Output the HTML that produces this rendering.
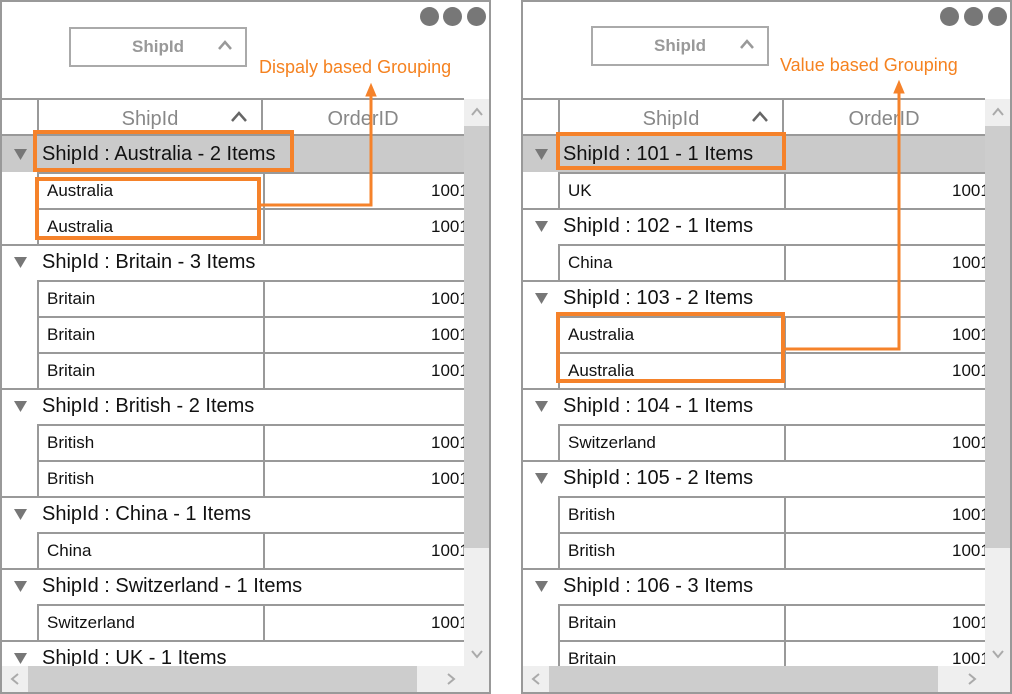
<!DOCTYPE html>
<html><head><meta charset="utf-8"><style>
*{margin:0;padding:0;box-sizing:border-box}
body{width:1012px;height:694px;background:#fff;position:relative;overflow:hidden;font-family:"Liberation Sans",sans-serif}
.p{position:absolute;top:0;width:491px;height:694px;border:2px solid #999;background:#fff;overflow:hidden}
.dot{position:absolute;top:5px;width:19px;height:19px;border-radius:50%;background:#777}
.combo{position:absolute;width:178px;height:40px;border:2px solid #aaa;color:#999;font-size:17px;font-weight:bold;text-align:center;line-height:36px}
.combo svg{position:absolute;right:13px;top:11px}
.grid{position:absolute;left:0;top:96px;width:462px;height:568px;overflow:hidden;border-top:2px solid #999}
.hd{position:absolute;top:0;left:0;width:462px;height:36px;border-bottom:2px solid #999;color:#888;font-size:20px}
.hd .c1{position:absolute;left:35px;top:0;width:226px;height:36px;border-left:2px solid #999;border-right:2px solid #999;text-align:center;line-height:38px}
.hd .c1 svg{position:absolute;right:14px;top:11px}
.hd .c2{position:absolute;left:261px;width:200px;top:0;text-align:center;line-height:38px}
.g{position:absolute;left:0;width:462px;height:36px;font-size:20px;color:#111;line-height:36px}
.g svg{position:absolute;left:12px;top:13px}
.g .x{position:absolute;left:40px;top:0;white-space:nowrap}
.g.gr{background:#cacaca}
.line{position:absolute;left:0;width:462px;height:2px;background:#999}
.r{position:absolute;left:35px;width:440px;height:36px;border-left:2px solid #999;border-top:2px solid #999;font-size:17px;color:#111;line-height:33px}
.r .a{position:absolute;left:8px;top:0}
.r .b{position:absolute;left:224px;top:0;width:200px;height:34px;border-left:2px solid #999}
.r .b span{position:absolute;left:166px}
.vs{position:absolute;left:462px;top:97px;width:26px;height:568px;background:#efefef}
.vs .th{position:absolute;left:0;top:27px;width:26px;height:422px;background:#cdcdcd}
.hs{position:absolute;left:0;top:664px;width:488px;height:26px;background:#efefef}
.hs .th{position:absolute;left:26px;top:0;width:389px;height:26px;background:#cdcdcd}
.ann{position:absolute;color:#f58220;font-size:18px;white-space:nowrap}
</style></head><body>

<div class="p" style="left:0">
<div class="dot" style="left:418px"></div><div class="dot" style="left:441px"></div><div class="dot" style="left:465px"></div>
<div class="combo" style="left:67px;top:25px">ShipId<svg width="14" height="10"><path d="M1 9 L7 2 L13 9" stroke="#999" stroke-width="2.5" fill="none"/></svg></div>
<div class="grid">
<div class="hd"><div class="c1">ShipId<svg width="16" height="11"><path d="M1 10 L8 2 L15 10" stroke="#666" stroke-width="2.5" fill="none"/></svg></div><div class="c2">OrderID</div></div>
<div class="g gr" style="top:36px"><svg width="13" height="11"><path d="M0 0 H13 L6.5 11 Z" fill="#777"/></svg><span class="x">ShipId : Australia - 2 Items</span></div>
<div class="r" style="top:72px"><span class="a">Australia</span><div class="b"><span>1001</span></div></div>
<div class="r" style="top:108px"><span class="a">Australia</span><div class="b"><span>1001</span></div></div>
<div class="line" style="top:144px"></div>
<div class="g" style="top:144px"><svg width="13" height="11"><path d="M0 0 H13 L6.5 11 Z" fill="#777"/></svg><span class="x">ShipId : Britain - 3 Items</span></div>
<div class="r" style="top:180px"><span class="a">Britain</span><div class="b"><span>1001</span></div></div>
<div class="r" style="top:216px"><span class="a">Britain</span><div class="b"><span>1001</span></div></div>
<div class="r" style="top:252px"><span class="a">Britain</span><div class="b"><span>1001</span></div></div>
<div class="line" style="top:288px"></div>
<div class="g" style="top:288px"><svg width="13" height="11"><path d="M0 0 H13 L6.5 11 Z" fill="#777"/></svg><span class="x">ShipId : British - 2 Items</span></div>
<div class="r" style="top:324px"><span class="a">British</span><div class="b"><span>1001</span></div></div>
<div class="r" style="top:360px"><span class="a">British</span><div class="b"><span>1001</span></div></div>
<div class="line" style="top:396px"></div>
<div class="g" style="top:396px"><svg width="13" height="11"><path d="M0 0 H13 L6.5 11 Z" fill="#777"/></svg><span class="x">ShipId : China - 1 Items</span></div>
<div class="r" style="top:432px"><span class="a">China</span><div class="b"><span>1001</span></div></div>
<div class="line" style="top:468px"></div>
<div class="g" style="top:468px"><svg width="13" height="11"><path d="M0 0 H13 L6.5 11 Z" fill="#777"/></svg><span class="x">ShipId : Switzerland - 1 Items</span></div>
<div class="r" style="top:504px"><span class="a">Switzerland</span><div class="b"><span>1001</span></div></div>
<div class="line" style="top:540px"></div>
<div class="g" style="top:540px"><svg width="13" height="11"><path d="M0 0 H13 L6.5 11 Z" fill="#777"/></svg><span class="x">ShipId : UK - 1 Items</span></div>
</div>
<div class="vs"><svg width="26" height="26" style="position:absolute;top:0;left:0"><path d="M8 16 L13 10 L18 16" stroke="#aaa" stroke-width="2" fill="none"/></svg><div class="th"></div><svg width="26" height="26" style="position:absolute;top:542px;left:0"><path d="M8 10 L13 16 L18 10" stroke="#aaa" stroke-width="2" fill="none"/></svg></div>
<div class="hs"><svg width="26" height="26" style="position:absolute;left:0;top:0"><path d="M16 8 L10 13 L16 18" stroke="#aaa" stroke-width="2" fill="none"/></svg><div class="th"></div><svg width="26" height="26" style="position:absolute;left:436px;top:0"><path d="M10 8 L16 13 L10 18" stroke="#aaa" stroke-width="2" fill="none"/></svg></div>
</div>

<div class="p" style="left:521px">
<div class="dot" style="left:417px"></div><div class="dot" style="left:441px"></div><div class="dot" style="left:465px"></div>
<div class="combo" style="left:68px;top:24px">ShipId<svg width="14" height="10"><path d="M1 9 L7 2 L13 9" stroke="#999" stroke-width="2.5" fill="none"/></svg></div>
<div class="grid">
<div class="hd"><div class="c1">ShipId<svg width="16" height="11"><path d="M1 10 L8 2 L15 10" stroke="#666" stroke-width="2.5" fill="none"/></svg></div><div class="c2">OrderID</div></div>
<div class="g gr" style="top:36px"><svg width="13" height="11"><path d="M0 0 H13 L6.5 11 Z" fill="#777"/></svg><span class="x">ShipId : 101 - 1 Items</span></div>
<div class="r" style="top:72px"><span class="a">UK</span><div class="b"><span>1001</span></div></div>
<div class="line" style="top:108px"></div>
<div class="g" style="top:108px"><svg width="13" height="11"><path d="M0 0 H13 L6.5 11 Z" fill="#777"/></svg><span class="x">ShipId : 102 - 1 Items</span></div>
<div class="r" style="top:144px"><span class="a">China</span><div class="b"><span>1001</span></div></div>
<div class="line" style="top:180px"></div>
<div class="g" style="top:180px"><svg width="13" height="11"><path d="M0 0 H13 L6.5 11 Z" fill="#777"/></svg><span class="x">ShipId : 103 - 2 Items</span></div>
<div class="r" style="top:216px"><span class="a">Australia</span><div class="b"><span>1001</span></div></div>
<div class="r" style="top:252px"><span class="a">Australia</span><div class="b"><span>1001</span></div></div>
<div class="line" style="top:288px"></div>
<div class="g" style="top:288px"><svg width="13" height="11"><path d="M0 0 H13 L6.5 11 Z" fill="#777"/></svg><span class="x">ShipId : 104 - 1 Items</span></div>
<div class="r" style="top:324px"><span class="a">Switzerland</span><div class="b"><span>1001</span></div></div>
<div class="line" style="top:360px"></div>
<div class="g" style="top:360px"><svg width="13" height="11"><path d="M0 0 H13 L6.5 11 Z" fill="#777"/></svg><span class="x">ShipId : 105 - 2 Items</span></div>
<div class="r" style="top:396px"><span class="a">British</span><div class="b"><span>1001</span></div></div>
<div class="r" style="top:432px"><span class="a">British</span><div class="b"><span>1001</span></div></div>
<div class="line" style="top:468px"></div>
<div class="g" style="top:468px"><svg width="13" height="11"><path d="M0 0 H13 L6.5 11 Z" fill="#777"/></svg><span class="x">ShipId : 106 - 3 Items</span></div>
<div class="r" style="top:504px"><span class="a">Britain</span><div class="b"><span>1001</span></div></div>
<div class="r" style="top:540px"><span class="a">Britain</span><div class="b"><span>1001</span></div></div>
</div>
<div class="vs"><svg width="26" height="26" style="position:absolute;top:0;left:0"><path d="M8 16 L13 10 L18 16" stroke="#aaa" stroke-width="2" fill="none"/></svg><div class="th"></div><svg width="26" height="26" style="position:absolute;top:542px;left:0"><path d="M8 10 L13 16 L18 10" stroke="#aaa" stroke-width="2" fill="none"/></svg></div>
<div class="hs"><svg width="26" height="26" style="position:absolute;left:0;top:0"><path d="M16 8 L10 13 L16 18" stroke="#aaa" stroke-width="2" fill="none"/></svg><div class="th"></div><svg width="26" height="26" style="position:absolute;left:436px;top:0"><path d="M10 8 L16 13 L10 18" stroke="#aaa" stroke-width="2" fill="none"/></svg></div>
</div>

<div class="ann" style="left:259px;top:57px">Dispaly based Grouping</div>
<div class="ann" style="left:780px;top:55px">Value based Grouping</div>
<svg width="1012" height="694" style="position:absolute;left:0;top:0" fill="none" stroke="#f5822a" stroke-width="4">
<rect x="35" y="132" width="257" height="38"/>
<rect x="37" y="179" width="222" height="59"/>
<polyline points="259,205 371,205 371,92" stroke-width="3"/>
<path d="M366 96 L371 84 L376 96 Z" fill="#f5822a" stroke-width="1"/>
<rect x="558" y="134" width="226" height="34"/>
<rect x="558" y="314" width="225" height="67"/>
<polyline points="783,349 899,349 899,90" stroke-width="3"/>
<path d="M894 93 L899 81 L904 93 Z" fill="#f5822a" stroke-width="1"/>
</svg>
</body></html>
